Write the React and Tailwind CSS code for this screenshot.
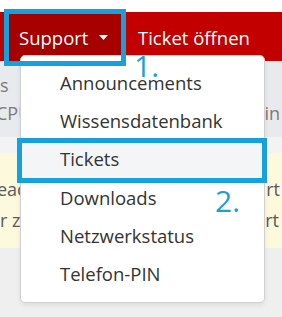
export default function App() {
  const font = { fontFamily: '"Open Sans", "Noto Sans", sans-serif' };
  const items = ["Announcements", "Wissensdatenbank", "Tickets", "Downloads", "Netzwerkstatus", "Telefon-PIN"];
  return (
    <div className="relative w-[282px] h-[317px] overflow-hidden bg-[#efefef]" style={font}>
      {/* top white strip */}
      <div className="h-[12px] bg-white" />
      {/* nav bar */}
      <div className="flex h-[49px] bg-[#c20000] text-white text-[18.5px]">
        <div className="ml-[9px] w-[112px] bg-[#a60000] pl-[10px] flex items-center">
          <span className="leading-[47px] pt-[2px]">Support</span>
          <svg className="ml-[11px] mt-[1px]" width="9" height="5" viewBox="0 0 9 5">
            <polygon points="0,0 9,0 4.5,5" fill="#ffffff" />
          </svg>
        </div>
        <div className="ml-[17px] leading-[47px] pt-[2px] whitespace-nowrap">Ticket öffnen</div>
      </div>
      {/* gray section */}
      <div className="bg-[#e9eaed] pt-[10px] pb-[10px] text-[18px] text-[#7a7a7a]">
        <div className="h-[28px] leading-[28px] flex justify-between">
          <span>s</span>
          <span />
        </div>
        <div className="h-[28px] leading-[28px] flex justify-between">
          <span className="-ml-[4px]">CPU</span>
          <span className="mr-[2px]">in</span>
        </div>
      </div>
      {/* light strip */}
      <div className="h-[16px] bg-[#f3f3f3]" />
      {/* yellow section */}
      <div className="bg-[#fcf9dd] pt-[21px] pb-[12px] text-[18px] text-[#5a5a5a]">
        <div className="h-[31px] leading-[31px] flex justify-between">
          <span className="-ml-[3px]">eac</span>
          <span className="mr-[2px]">rt</span>
        </div>
        <div className="h-[31px] leading-[31px] flex justify-between">
          <span>r z</span>
          <span className="mr-[3px]">rt</span>
        </div>
      </div>

      {/* dropdown menu */}
      <div className="absolute left-[20px] top-[55px] w-[245px] h-[248px] bg-white border border-[#d0d0d0] rounded-[5px] shadow-[0_2px_5px_rgba(0,0,0,0.08)] pt-[8px] text-[18.5px] text-[#333333]">
        {items.map((t) => (
          <div
            key={t}
            className={
              "h-[38.2px] leading-[38.2px] pl-[39px] whitespace-nowrap " +
              (t === "Tickets" ? "bg-[#f4f5f7]" : "")
            }
          >
            {t}
          </div>
        ))}
      </div>

      {/* annotation boxes */}
      <div className="absolute left-[4px] top-[9px] w-[122px] h-[57px] border-[5px] border-[#16a0dc]" />
      <div className="absolute left-[17px] top-[138px] w-[250px] h-[45px] border-[5px] border-[#16a0dc]" />
      <div className="absolute left-[134px] top-[51px] text-[30px] leading-[30px] text-[#1a9fd9]">1.</div>
      <div className="absolute left-[215px] top-[186px] text-[30px] leading-[30px] text-[#1a9fd9]">2.</div>
    </div>
  );
}
